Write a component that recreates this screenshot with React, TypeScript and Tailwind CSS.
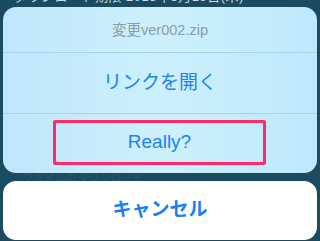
import React from "react";

export default function App() {
  return (
    <div
      className="relative w-[320px] h-[241px] overflow-hidden bg-[#1a4b61]"
      style={{ fontFamily: '"Liberation Sans", "Noto Sans CJK JP", sans-serif' }}
    >
      <div className="absolute left-[14px] top-[-13px] text-[13px] text-[#c9dbe3] whitespace-nowrap tracking-[0.5px]">
        ダウンロード期限 2015年3月19日(木)
      </div>
      <div className="absolute left-[22px] top-[170px] text-[11px] text-[#3f6d80] opacity-40 whitespace-nowrap">
        ファイルのダウンロード
      </div>
      <div className="relative flex flex-col px-[3px] pt-[7px]">
        <div className="flex flex-col h-[166px] rounded-[13px] overflow-hidden bg-gradient-to-r from-[#bfe7fa] via-[#cdf0fc] to-[#bde9fb]">
          <div className="h-[45px] pt-[3px] flex items-center justify-center text-[14.5px] text-[#8b9ba3]">
            変更ver002.zip
          </div>
          <div className="h-px bg-[#9fd5ee]" />
          <div className="h-[60px] pt-[1px] flex items-center justify-center text-[19px] text-[#1f80f0]">
            リンクを開く
          </div>
          <div className="h-px bg-[#9fd5ee]" />
          <div className="flex-1 pt-[6px] pl-[50px]">
            <div className="w-[213px] h-[45px] border-[3px] border-[#ff2b68] rounded-[2px] flex items-center justify-center text-[19px] text-[#1f80f0]">
              Really?
            </div>
          </div>
        </div>
        <div className="mt-[8px] h-[59px] rounded-[13px] bg-white flex items-center justify-center text-[19px] font-bold text-[#1a7ff3]">
          キャンセル
        </div>
      </div>
    </div>
  );
}
